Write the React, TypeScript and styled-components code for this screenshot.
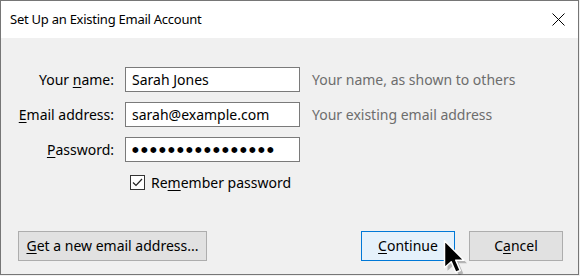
import React from 'react';
import styled, { createGlobalStyle } from 'styled-components';

const Global = createGlobalStyle`
  html, body {
    margin: 0;
    padding: 0;
    background: #f0f0f0;
  }
  * {
    box-sizing: border-box;
  }
`;

const Window = styled.div`
  position: relative;
  width: 579px;
  height: 275px;
  display: flex;
  flex-direction: column;
  border: 1px solid #767676;
  background: #f0f0f0;
  font-family: 'Noto Sans', 'Open Sans', sans-serif;
  font-size: 14px;
  color: #000;
`;

const TitleBar = styled.div`
  height: 37px;
  background: #fff;
  display: flex;
  align-items: center;
  justify-content: space-between;
  padding: 0 13px 0 9px;
`;

const Title = styled.div`
  font-size: 13px;
  letter-spacing: -0.25px;
  padding-bottom: 2px;
`;

const CloseBtn = styled.div`
  width: 13px;
  height: 13px;
  display: flex;
`;

const Body = styled.div`
  flex: 1;
  display: flex;
  flex-direction: column;
  padding: 29px 15px 13px 17px;
`;

const Form = styled.div`
  display: grid;
  grid-template-columns: 96px 175px auto;
  column-gap: 11px;
  row-gap: 10px;
  align-items: center;
`;

const Label = styled.label`
  text-align: right;
  white-space: nowrap;
`;

const Key = styled.span`
  text-decoration: underline;
  text-underline-offset: 2px;
`;

const Field = styled.input<{ $dots?: boolean }>`
  width: 175px;
  height: 25px;
  border: 1px solid #7a7a7a;
  background: #fff;
  padding: 0 6px;
  font: inherit;
  outline: none;
  color: #000;
  ${p => p.$dots && `
    font-family: 'DejaVu Sans', sans-serif;
    font-size: 7.7px;
    letter-spacing: 2.3px;
    padding-left: 6px;
  `}
`;

const Hint = styled.span`
  color: #6d6d6d;
  white-space: nowrap;
  margin-left: 1px;
`;

const CheckRow = styled.div`
  grid-column: 2 / 4;
  display: flex;
  align-items: center;
  gap: 6px;
  padding-left: 5px;
  margin-top: 1px;
`;

const Box = styled.span`
  width: 15px;
  height: 15px;
  border: 1px solid #333;
  background: #fff;
  display: flex;
  align-items: center;
  justify-content: center;
`;

const Footer = styled.div`
  margin-top: auto;
  display: flex;
  justify-content: space-between;
  align-items: center;
`;

const Group = styled.div`
  display: flex;
  gap: 14px;
`;

const Button = styled.div<{ $primary?: boolean; $w: number }>`
  width: ${p => p.$w}px;
  height: 30px;
  display: flex;
  align-items: center;
  justify-content: center;
  background: ${p => (p.$primary ? '#e5f1fb' : '#e1e1e1')};
  border: 1px solid ${p => (p.$primary ? '#0078d7' : '#adadad')};
  padding-bottom: 1px;
  white-space: nowrap;
`;

const Cursor = styled.svg`
  position: absolute;
  left: 442px;
  top: 238px;
`;

export default function App() {
  return (
    <>
      <Global />
      <Window>
        <TitleBar>
          <Title>Set Up an Existing Email Account</Title>
          <CloseBtn>
            <svg width="13" height="13" viewBox="0 0 13 13">
              <path d="M0.5 0.5 L12.5 12.5 M12.5 0.5 L0.5 12.5" stroke="#000" strokeWidth="1" />
            </svg>
          </CloseBtn>
        </TitleBar>
        <Body>
          <Form>
            <Label>Your <Key>n</Key>ame:</Label>
            <Field defaultValue="Sarah Jones" readOnly />
            <Hint>Your name, as shown to others</Hint>

            <Label><Key>E</Key>mail address:</Label>
            <Field defaultValue="sarah@example.com" readOnly />
            <Hint>Your existing email address</Hint>

            <Label><Key>P</Key>assword:</Label>
            <Field $dots defaultValue={'●'.repeat(16)} readOnly />
            <span />

            <CheckRow>
              <Box>
                <svg width="11" height="9" viewBox="0 0 11 9">
                  <path d="M1 4.5 L4 7.5 L10 1" stroke="#222" strokeWidth="1.2" fill="none" />
                </svg>
              </Box>
              <span>Re<Key>m</Key>ember password</span>
            </CheckRow>
          </Form>
          <Footer>
            <Button $w={189}><span><Key>G</Key>et a new email address...</span></Button>
            <Group>
              <Button $primary $w={94}><span><Key>C</Key>ontinue</span></Button>
              <Button $w={94}><span>C<Key>a</Key>ncel</span></Button>
            </Group>
          </Footer>
        </Body>
        <Cursor width="24" height="38" viewBox="0 0 16 25">
          <path d="M2 2 L2 20 L6.5 16 L9.5 23 L12.5 21.8 L9.5 15 L15 15 Z" fill="rgba(0,0,0,0.25)" transform="translate(1 1)" />
          <path d="M1 1 L1 19 L5.5 15 L8.5 22 L11.5 20.8 L8.5 14 L14 14 Z" fill="#000" stroke="#fff" strokeWidth="1" strokeLinejoin="round" />
        </Cursor>
      </Window>
    </>
  );
}
